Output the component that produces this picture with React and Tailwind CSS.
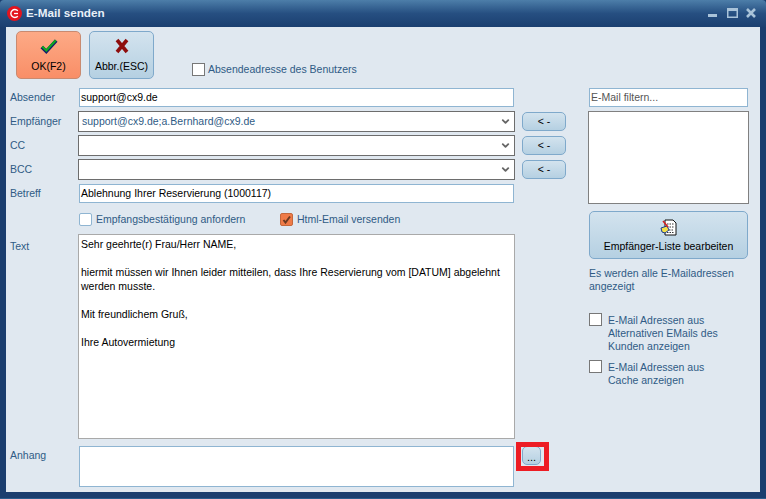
import { ChevronDown } from 'lucide-react';

const FONT = { fontFamily: '"Liberation Sans", Arial, sans-serif' };

const BTN = 'border border-[#7fa9cb] rounded-[5px] bg-gradient-to-b from-[#d3e3ee] to-[#b5d0e2] text-black';

// gray-bordered combo box
const Combo = ({ value }) => (
  <div className="h-[21px] w-[437px] -mx-px border border-[#6d6d6d] bg-white flex items-center pl-[3px] pr-[3px] text-[#2f5b85]">
    <span className="flex-1 truncate">{value}</span>
    <ChevronDown size={11} strokeWidth={4} className="text-[#666]" />
  </div>
);

const Input = ({ value, className = 'h-[19px] w-[435px]' }) => (
  <div className={`${className} border border-[#8fb5d2] bg-white flex items-center pl-[1px] text-black`}>{value}</div>
);

const ArrowBtn = () => (
  <button className={`${BTN} ml-[8px] w-[44px] h-[19px] flex items-center justify-center gap-[3px] text-[10.5px] leading-none`}>
    <span>&lt;</span><span>-</span>
  </button>
);

const Row = ({ label, children, className = '' }) => (
  <div className={`flex items-center ${className}`}>
    <span className="w-[69px] text-[#2f5b85]">{label}</span>
    {children}
  </div>
);

const Check = ({ checked, orange }) => (
  <span
    className={`w-[13px] h-[13px] shrink-0 flex items-center justify-center border ${
      orange ? 'border-[#c4683c] rounded-[2px] bg-[#ef7b48]' : 'border-[#777] bg-white'
    }`}
  >
    {checked && (
      <svg width="9" height="9" viewBox="0 0 9 9">
        <path d="M1.5 5 L3.5 7.5 L8 1.5" fill="none" stroke="#6b3a22" strokeWidth="2" />
      </svg>
    )}
  </span>
);

export default function App() {
  return (
    <div style={FONT} className="w-[766px] h-[499px] bg-[#1a3d6e] flex flex-col text-[10.5px] leading-[13px] overflow-hidden">
      {/* Title bar */}
      <div className="h-[27px] shrink-0 rounded-t-[4px] bg-gradient-to-b from-[#4d7ea9] via-[#264f81] to-[#1b3f70] flex items-center pl-[7px] pr-[10px]">
        <svg width="15" height="15" viewBox="0 0 15 15">
          <circle cx="7.5" cy="7.5" r="7.5" fill="#e3141e" />
          <path d="M10.8 4.8 A4 4 0 1 0 10.8 10.2" fill="none" stroke="#fff" strokeWidth="1.4" />
          <path d="M7 7.5 H11" stroke="#fff" strokeWidth="1.3" />
        </svg>
        <span className="ml-[4px] mb-[2px] flex-1 font-bold text-[11.7px] text-[#e8f0f8]">E-Mail senden</span>
        <svg width="48" height="10" viewBox="0 0 48 10" className="mt-[-1px]">
          <path d="M0 6 H9 V9 H0 Z" fill="#a9c3d9" />
          <path d="M19 0 H30 V10 H19 Z M20.5 3 V8.5 H28.5 V3 Z" fill="#a9c3d9" fillRule="evenodd" />
          <path d="M39 1 L47 9 M47 1 L39 9" stroke="#a9c3d9" strokeWidth="2.6" />
        </svg>
      </div>

      {/* Client area */}
      <div className="mx-[6px] flex-1 bg-[#e0e8f0] pl-[4px] pt-[4px]">
        <div className="flex items-end pl-[6px] h-[48px]">
          <button className="w-[65px] h-[48px] border border-[#c98a70] rounded-[5px] bg-gradient-to-b from-[#fdaa86] to-[#f98e67] flex flex-col items-center pt-[5px] text-[10.5px] text-black">
            <svg width="18" height="18" viewBox="0 0 20 18">
              <path d="M2 10 L7 15 L18 3" fill="none" stroke="#10206a" strokeWidth="4" />
              <path d="M2.5 9.5 L7 14 L17.5 2.5" fill="none" stroke="#12a81e" strokeWidth="2.4" />
            </svg>
            <span className="mt-[5px]">OK(F2)</span>
          </button>
          <button className={`${BTN} ml-[8px] w-[65px] h-[48px] flex flex-col items-center pt-[5px] text-[10.5px]`}>
            <svg width="16" height="18" viewBox="0 0 16 18">
              <path d="M3 3 L13 15 M13 3 L3 15" stroke="#8e0d0d" strokeWidth="3.6" />
            </svg>
            <span className="mt-[5px]">Abbr.(ESC)</span>
          </button>
          <label className="ml-[38px] mb-[3px] flex items-center gap-[3px] text-[#2f5b85]">
            <Check />
            Absendeadresse des Benutzers
          </label>
        </div>

        <div className="flex mt-[9px]">
          {/* Left column */}
          <div className="w-[579px] shrink-0">
            <Row label="Absender"><Input value="support@cx9.de" /></Row>
            <Row label="Empfänger" className="mt-[4px]">
              <Combo value="support@cx9.de;a.Bernhard@cx9.de" /><ArrowBtn />
            </Row>
            <Row label="CC" className="mt-[3px]"><Combo /><ArrowBtn /></Row>
            <Row label="BCC" className="mt-[3px]"><Combo /><ArrowBtn /></Row>
            <Row label="Betreff" className="mt-[4px]"><Input value="Ablehnung Ihrer Reservierung (1000117)" /></Row>

            <div className="flex items-center mt-[10px] pl-[69px] h-[13px] text-[#2f5b85]">
              <span className="w-[13px] h-[13px] border border-[#8fb5d2] rounded-[2px] bg-white" />
              <span className="ml-[4px] w-[184px]">Empfangsbestätigung anfordern</span>
              <Check checked orange />
              <span className="ml-[4px]">Html-Email versenden</span>
            </div>

            <div className="flex mt-[8px]">
              <span className="w-[69px] pt-[6px] text-[#2f5b85]">Text</span>
              <div className="w-[437px] h-[205px] -mx-px border border-[#a9a9a9] bg-white px-[2px] pt-[2px] leading-[14px] text-black">
                <p>Sehr geehrte(r) Frau/Herr NAME,</p>
                <p className="mt-[14px]">hiermit müssen wir Ihnen leider mitteilen, dass Ihre Reservierung vom [DATUM] abgelehnt</p>
                <p>werden musste.</p>
                <p className="mt-[14px]">Mit freundlichem Gruß,</p>
                <p className="mt-[14px]">Ihre Autovermietung</p>
              </div>
            </div>

            <div className="flex mt-[7px]">
              <span className="w-[69px] pt-[3px] text-[#2f5b85]">Anhang</span>
              <div className="w-[435px] h-[41px] border border-[#8fb5d2] bg-white" />
              <button className={`${BTN} relative ml-[8px] w-[19px] h-[19px] flex items-end justify-center text-[11px] leading-[14px]`}>
                ...
                {/* red annotation frame from the screenshot */}
                <span className="absolute left-[-7px] top-[-5px] w-[33px] h-[29px] border-[5px] border-[#ed1c24]" />
              </button>
            </div>
          </div>

          {/* Right column */}
          <div className="w-[159px] shrink-0 text-[#2f5b85]">
            <div className="h-[19px] border border-[#8fb5d2] bg-white flex items-center pl-[1px] text-[#555]">E-Mail filtern...</div>
            <div className="h-[93px] -mx-px mt-[4px] border border-[#808080] bg-white" />
            <button className={`${BTN} w-[159px] h-[48px] mt-[7px] flex flex-col items-center pt-[7px] text-[10.5px]`}>
              <svg width="17" height="17" viewBox="0 0 17 17">
                <path d="M5 1 H13 L16 4 V16 H5 Z" fill="#fff" stroke="#111" />
                <path d="M7 5 H14 M7 8 H14 M9 11 H14 M7 13.5 H14" stroke="#333" strokeDasharray="1.5 1" />
                <path d="M1 9 L7 7 L9 11 L5 14 L2 13 Z" fill="#f4e04a" stroke="#1a3d8e" />
                <path d="M3 2 L8 8" stroke="#d42020" strokeWidth="1.5" />
              </svg>
              <span className="mt-[4px]">Empfänger-Liste bearbeiten</span>
            </button>
            <p className="mt-[8px]">Es werden alle E-Mailadressen<br />angezeigt</p>
            <label className="flex gap-[6px] mt-[20px]">
              <Check />
              <span className="pt-px">E-Mail Adressen aus<br />Alternativen EMails des<br />Kunden anzeigen</span>
            </label>
            <label className="flex gap-[6px] mt-[7px]">
              <Check />
              <span className="pt-px">E-Mail Adressen aus<br />Cache anzeigen</span>
            </label>
          </div>
        </div>
      </div>
      <div className="h-[7px] shrink-0 border-b border-[#2c5c8c]" />
    </div>
  );
}
